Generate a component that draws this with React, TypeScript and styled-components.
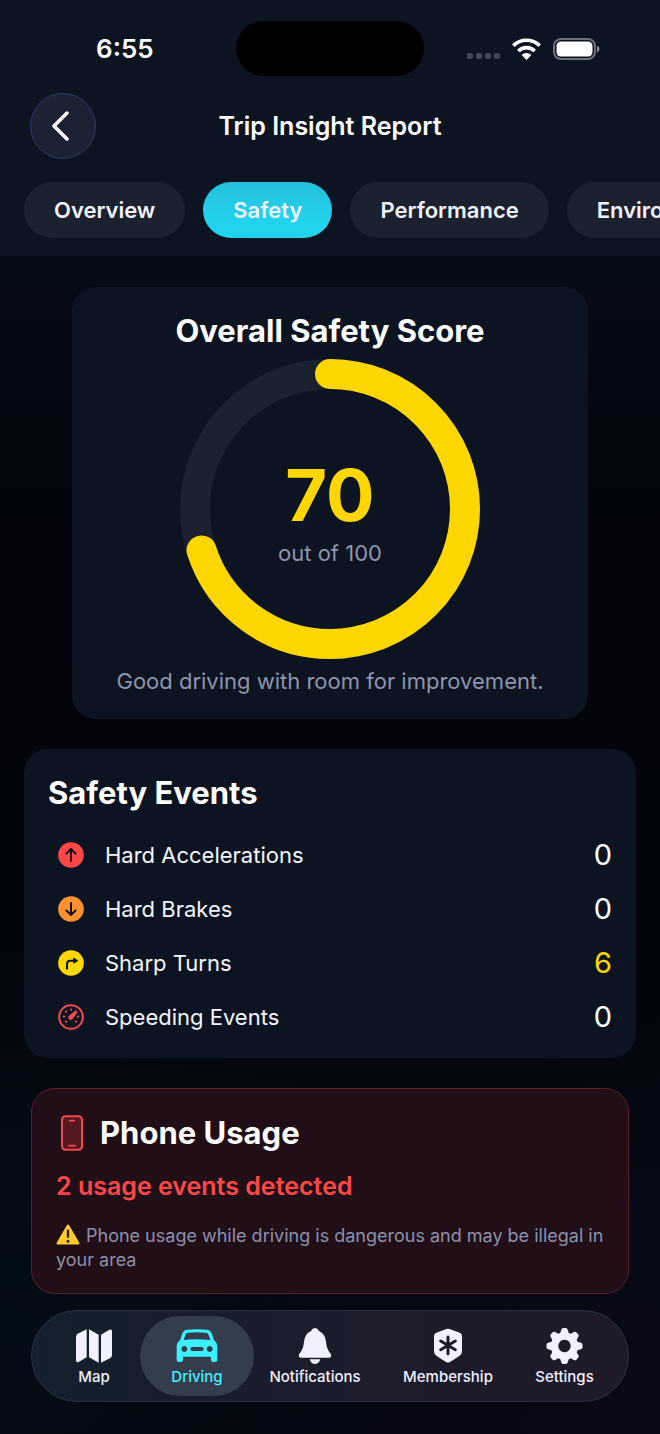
import React from "react";
import styled, { createGlobalStyle } from "styled-components";

const GlobalStyle = createGlobalStyle`
  *, *::before, *::after { box-sizing: border-box; }
  body { margin: 0; background: #04060f; }
  button { font: inherit; color: inherit; border: 0; padding: 0; cursor: pointer; }
  h1, h2, p, ul { margin: 0; padding: 0; }
  ul { list-style: none; }
`;

const Page = styled.div`
  min-height: 100vh;
  display: flex;
  flex-direction: column;
  font-family: Inter, "Liberation Sans", sans-serif;
  color: #fff;
  background:
    radial-gradient(ellipse 70% 30% at 0% 94%, rgba(2, 18, 26, 0.5), transparent),
    radial-gradient(ellipse 70% 30% at 100% 100%, rgba(20, 12, 34, 0.4), transparent),
    linear-gradient(180deg, #050b15 18%, #03040d 38%, #03050d 70%, #040a14 84%, #04060f 100%);
`;

const Header = styled.header`
  background: #0d1421;
  padding-bottom: 18px;
`;

const StatusRow = styled.div`
  display: grid;
  grid-template-columns: 1fr 188px 1fr;
  align-items: center;
  height: 93px;
  padding-top: 4px;
`;

const StatusSlot = styled.div`
  display: flex;
  align-items: center;
  gap: 12px;
`;

const ClockSlot = styled(StatusSlot)`
  padding-left: 96px;
`;

const SignalSlot = styled(StatusSlot)`
  justify-content: flex-end;
  padding-right: 60px;
`;

const Clock = styled.time`
  font-size: 26px;
  font-weight: 600;
  line-height: 32px;
`;

const Island = styled.div`
  height: 55px;
  border-radius: 28px;
  background: #000;
`;

const TitleRow = styled.div`
  display: grid;
  grid-template-columns: 66px 1fr 66px;
  align-items: center;
  padding: 0 30px;
`;

const BackButton = styled.button`
  display: flex;
  align-items: center;
  justify-content: center;
  width: 66px;
  height: 66px;
  border-radius: 50%;
  border: 1px solid #2c3a66;
  background: #1a2233;
`;

const PageTitle = styled.h1`
  text-align: center;
  font-size: 25px;
  font-weight: 600;
  line-height: 32px;
`;

const Tabs = styled.nav`
  display: flex;
  gap: 18px;
  margin-top: 23px;
  padding: 0 24px;
  overflow-x: auto;
  scrollbar-width: none;
`;

const Tab = styled.button<{ $active?: boolean }>`
  flex: none;
  height: 56px;
  padding: 0 30px;
  border-radius: 28px;
  font-size: 22px;
  font-weight: 600;
  color: #f0f2ff;
  background: ${(p) => (p.$active ? "linear-gradient(180deg, #25bfd9, #22d3ee 70%)" : "#1b212e")};
`;

const Content = styled.main`
  flex: 1;
  display: flex;
  flex-direction: column;
  gap: 30px;
  padding: 31px 24px 16px;
`;

const Card = styled.section`
  border-radius: 24px;
  padding: 24px 24px 23px;
  background: #0d1421;
`;

const ScoreCard = styled(Card)`
  display: flex;
  flex-direction: column;
  align-items: center;
  gap: 8px;
  margin: 0 48px;
  padding-bottom: 24px;
`;

const CardTitle = styled.h2`
  font-size: 31px;
  font-weight: 700;
  line-height: 40px;
`;

const Gauge = styled.div`
  display: grid;
  place-items: center;
  & > * { grid-area: 1 / 1; }
`;

const GaugeText = styled.div`
  display: flex;
  flex-direction: column;
  align-items: center;
`;

const Score = styled.strong`
  font-size: 72px;
  font-weight: 700;
  line-height: 88px;
  color: #ffd700;
`;

const Muted = styled.p`
  font-size: 22px;
  line-height: 28px;
  color: #8e95ad;
`;

const EventList = styled.ul`
  display: flex;
  flex-direction: column;
  gap: 18px;
  margin-top: 24px;
`;

const EventRow = styled.li`
  display: flex;
  align-items: center;
  gap: 12px;
  font-size: 22px;
  line-height: 36px;
  color: #f4f6ff;
`;

const IconSlot = styled.span<{ $width: number }>`
  flex: none;
  display: flex;
  justify-content: center;
  width: ${(p) => p.$width}px;
`;

const EventCount = styled.span<{ $alert?: boolean }>`
  margin-left: auto;
  font-size: 29px;
  color: ${(p) => (p.$alert ? "#ffd700" : "#fff")};
`;

const AlertCard = styled(Card)`
  margin: 0 7px;
  padding-bottom: 21px;
  border: 1px solid #5a1f29;
  background: #200f17;
`;

const AlertHeading = styled.div`
  display: flex;
  align-items: center;
  gap: 12px;
`;

const AlertCount = styled.p`
  margin-top: 18px;
  font-size: 25px;
  font-weight: 600;
  line-height: 30px;
  color: #ff4747;
`;

const AlertNote = styled.p`
  margin-top: 23px;
  font-size: 18px;
  line-height: 24px;
  color: #8e90ac;
  & > svg { margin-right: 6px; vertical-align: -3px; }
`;

const TabBar = styled.nav`
  display: grid;
  grid-template-columns: 92fr 114fr 122fr 144fr 89fr;
  margin: 0 31px 32px;
  padding: 5px 19px 5px 16px;
  border: 1px solid #2b3245;
  border-radius: 46px;
  background: linear-gradient(90deg, #13202b, #1c1c2b 55%, #1f1a28);
`;

const BarItem = styled.button<{ $active?: boolean }>`
  display: flex;
  flex-direction: column;
  align-items: center;
  gap: 3px;
  height: 80px;
  padding-top: 11px;
  border-radius: 40px;
  font-size: 15px;
  font-weight: 500;
  line-height: 20px;
  color: ${(p) => (p.$active ? "#3df0ff" : "#f0f0ff")};
  background: ${(p) => (p.$active ? "#343d4b" : "none")};
`;

const BarIcon = styled.span`
  display: grid;
  place-items: center;
  height: 37px;
`;

const WifiIcon = () => (
  <svg width="29" height="22" viewBox="0 0 87 66" fill="none" stroke="#fff" strokeWidth="11" aria-hidden="true">
    <path d="M4 23 A56 56 0 0 1 83 23" />
    <path d="M19 39 A35 35 0 0 1 68 39" />
    <path d="M43.500 66 L29 51 A21 21 0 0 1 58 51 Z" fill="#fff" stroke="none" />
  </svg>
);

const BatteryIcon = () => (
  <svg width="47" height="22" viewBox="0 0 47 22" aria-hidden="true">
    <rect x="1" y="1" width="41" height="20" rx="7" fill="none" stroke="#6c717c" strokeWidth="2" />
    <rect x="3.500" y="3.500" width="36" height="15" rx="4.500" fill="#fff" />
    <path d="M44 7.500 Q46.500 8.500 46.500 11 Q46.500 13.500 44 14.500 Z" fill="#8a8e98" />
  </svg>
);

const SignalDots = () => (
  <svg width="33" height="22" viewBox="0 0 33 22" fill="#414652" aria-hidden="true">
    {[0, 9, 18, 27].map((x) => <rect key={x} x={x} y="15" width="6" height="6" rx="2" />)}
  </svg>
);

const disc = (fill: string, glyph: React.ReactNode) => (
  <svg width="26" height="26" viewBox="0 0 78 78" fill="none" stroke="#10131f" strokeWidth="6" strokeLinecap="round" strokeLinejoin="round" aria-hidden="true">
    <circle cx="39" cy="39" r="38.500" fill={fill} stroke="none" />
    {glyph}
  </svg>
);

const GaugeIcon = () => (
  <svg width="26" height="26" viewBox="0 0 78 78" fill="#f84a50" aria-hidden="true">
    <circle cx="39" cy="39" r="35.500" fill="none" stroke="#f84a50" strokeWidth="6" />
    {[[39, 17], [24, 23], [18, 38], [24, 53], [54, 53], [60, 38]].map(([x, y]) => (
      <circle key={`${x}-${y}`} cx={x} cy={y} r="3.300" />
    ))}
    <path d="M54 19 L59 24 L44 45 A7 7 0 1 1 33 35 Z" />
  </svg>
);

const events = [
  { label: "Hard Accelerations", count: 0, icon: disc("#ff4747", <path d="M39 57 V22 M25 35 L39 21 L53 35" />) },
  { label: "Hard Brakes", count: 0, icon: disc("#ff9230", <path d="M39 21 V56 M25 43 L39 57 L53 43" />) },
  {
    label: "Sharp Turns",
    count: 6,
    icon: disc("#ffd700", <><path d="M27 56 V42 Q27 32 37 32 H48" /><path d="M48 25 L59 32 L48 39 Z" fill="#10131f" strokeWidth="3" /></>),
  },
  { label: "Speeding Events", count: 0, icon: <GaugeIcon /> },
];

const PhoneIcon = () => (
  <svg width="22" height="36" viewBox="0 0 66 108" fill="none" stroke="#f5474d" aria-hidden="true">
    <rect x="3" y="4" width="60" height="100" rx="10" fill="#551820" strokeWidth="6" />
    <path d="M26 17 H40 M23 92 H43" strokeWidth="5" strokeLinecap="round" />
  </svg>
);

const WarningIcon = () => (
  <svg width="24" height="21" viewBox="0 0 72 63" role="img" aria-label="Warning">
    <path d="M36 5 L67 58 H5 Z" fill="#ffcb2e" stroke="#ffcb2e" strokeWidth="7" strokeLinejoin="round" />
    <path d="M36 20 V38" stroke="#2a2320" strokeWidth="7" strokeLinecap="round" />
    <circle cx="36" cy="52" r="4.500" fill="#2a2320" />
  </svg>
);

const MapIcon = () => (
  <svg width="36" height="35" viewBox="0 0 108 105" fill="currentColor" aria-hidden="true">
    <path d="M32 4 V88 L8 102 Q0 105 0 97 V26 Q0 20 5 17 Z" />
    <path d="M39 4 L68 20 V104 L39 88 Z" />
    <path d="M75 20 L100 5 Q108 2 108 10 V81 Q108 87 103 90 L75 104 Z" />
  </svg>
);

const CarIcon = () => (
  <svg width="42" height="35" viewBox="0 0 126 105" fill="currentColor" fillRule="evenodd" aria-hidden="true">
    <path d="M19 16 Q23 6 34 5 Q63 2 92 5 Q103 6 107 16 L114 37 Q124 44 124 56 V95 Q124 102 117 102 H112 Q105 102 105 95 V86 H21 V95 Q21 102 14 102 H9 Q2 102 2 95 V56 Q2 44 12 37 Z M29 19 L23 36 Q63 32 103 36 L97 19 Q95 14 90 14 Q63 11 36 14 Q31 14 29 19 Z M25 54 a9 9 0 1 0 0.100 0 Z M101 54 a9 9 0 1 0 0.100 0 Z M49 57 H77 a6 6 0 0 1 0 12 H49 a6 6 0 0 1 0 -12 Z" />
  </svg>
);

const BellIcon = () => (
  <svg width="34" height="36" viewBox="0 0 102 108" fill="currentColor" aria-hidden="true">
    <path d="M51 0 Q59 0 63 9 Q82 17 84 42 Q85 60 93 71 Q100 78 100 83 Q100 89 92 89 H10 Q2 89 2 83 Q2 78 9 71 Q17 60 18 42 Q20 17 39 9 Q43 0 51 0 Z" />
    <path d="M35 94 H67 Q63 108 51 108 Q39 108 35 94 Z" />
  </svg>
);

const ShieldIcon = () => (
  <svg width="30" height="35" viewBox="0 0 90 105" fill="currentColor" aria-hidden="true">
    <path d="M40 3 Q45 1 50 3 L80 14 Q87 17 87 24 V69 Q87 78 80 83 L51 102 Q45 105 39 102 L10 83 Q3 78 3 69 V24 Q3 17 10 14 Z" />
    <path d="M45 27 V77 M23 39 L67 65 M67 39 L23 65" stroke="#1d1b2a" strokeWidth="9" strokeLinecap="round" />
  </svg>
);

const GearIcon = () => (
  <svg width="37" height="36" viewBox="-55 -55 110 110" fill="currentColor" aria-hidden="true">
    <path fillRule="evenodd" d="M0 -42 A42 42 0 1 1 -0.100 -42 Z M0 -19 A19 19 0 1 0 0.100 -19 Z" />
    {[0, 45, 90, 135, 180, 225, 270, 315].map((a) => (
      <path key={a} transform={`rotate(${a})`} d="M-14 -36 L-10 -50 Q-8 -55 -4 -55 H4 Q8 -55 10 -50 L14 -36 Z" />
    ))}
  </svg>
);

const barItems = [
  { label: "Map", icon: <MapIcon /> },
  { label: "Driving", icon: <CarIcon />, active: true },
  { label: "Notifications", icon: <BellIcon /> },
  { label: "Membership", icon: <ShieldIcon /> },
  { label: "Settings", icon: <GearIcon /> },
];

const score = 70;
const radius = 135;
const circumference = 2 * Math.PI * radius;

export default function App() {
  return (
    <Page>
      <GlobalStyle />
      <Header>
        <StatusRow>
          <ClockSlot><Clock>6:55</Clock></ClockSlot>
          <Island />
          <SignalSlot><SignalDots /><WifiIcon /><BatteryIcon /></SignalSlot>
        </StatusRow>
        <TitleRow>
          <BackButton aria-label="Back">
            <svg width="22" height="30" viewBox="0 0 22 30" fill="none" stroke="#fff" strokeWidth="3.500" strokeLinecap="round" strokeLinejoin="round" aria-hidden="true">
              <path d="M15 2 L2 15 L15 28" />
            </svg>
          </BackButton>
          <PageTitle>Trip Insight Report</PageTitle>
        </TitleRow>
        <Tabs aria-label="Report sections">
          <Tab>Overview</Tab>
          <Tab $active aria-current="page">Safety</Tab>
          <Tab>Performance</Tab>
          <Tab>Environment</Tab>
        </Tabs>
      </Header>
      <Content>
        <ScoreCard>
          <CardTitle>Overall Safety Score</CardTitle>
          <Gauge>
            <svg width="300" height="300" viewBox="0 0 300 300" fill="none" strokeWidth="30" aria-hidden="true">
              <circle cx="150" cy="150" r={radius} stroke="#1b212e" />
              <circle
                cx="150" cy="150" r={radius} stroke="#ffd700" strokeLinecap="round"
                strokeDasharray={`${(circumference * score) / 100} ${circumference}`}
                transform="rotate(-90 150 150)"
              />
            </svg>
            <GaugeText>
              <Score>{score}</Score>
              <Muted>out of 100</Muted>
            </GaugeText>
          </Gauge>
          <Muted>Good driving with room for improvement.</Muted>
        </ScoreCard>
        <Card>
          <CardTitle>Safety Events</CardTitle>
          <EventList>
            {events.map((e) => (
              <EventRow key={e.label}>
                <IconSlot $width={45}>{e.icon}</IconSlot>
                {e.label}
                <EventCount $alert={e.count > 0}>{e.count}</EventCount>
              </EventRow>
            ))}
          </EventList>
        </Card>
        <AlertCard>
          <AlertHeading>
            <IconSlot $width={32}><PhoneIcon /></IconSlot>
            <CardTitle>Phone Usage</CardTitle>
          </AlertHeading>
          <AlertCount>2 usage events detected</AlertCount>
          <AlertNote>
            <WarningIcon />
            Phone usage while driving is dangerous and may be illegal in your area
          </AlertNote>
        </AlertCard>
      </Content>
      <TabBar aria-label="Main">
        {barItems.map((b) => (
          <BarItem key={b.label} $active={b.active} aria-current={b.active ? "page" : undefined}>
            <BarIcon>{b.icon}</BarIcon>
            {b.label}
          </BarItem>
        ))}
      </TabBar>
    </Page>
  );
}
